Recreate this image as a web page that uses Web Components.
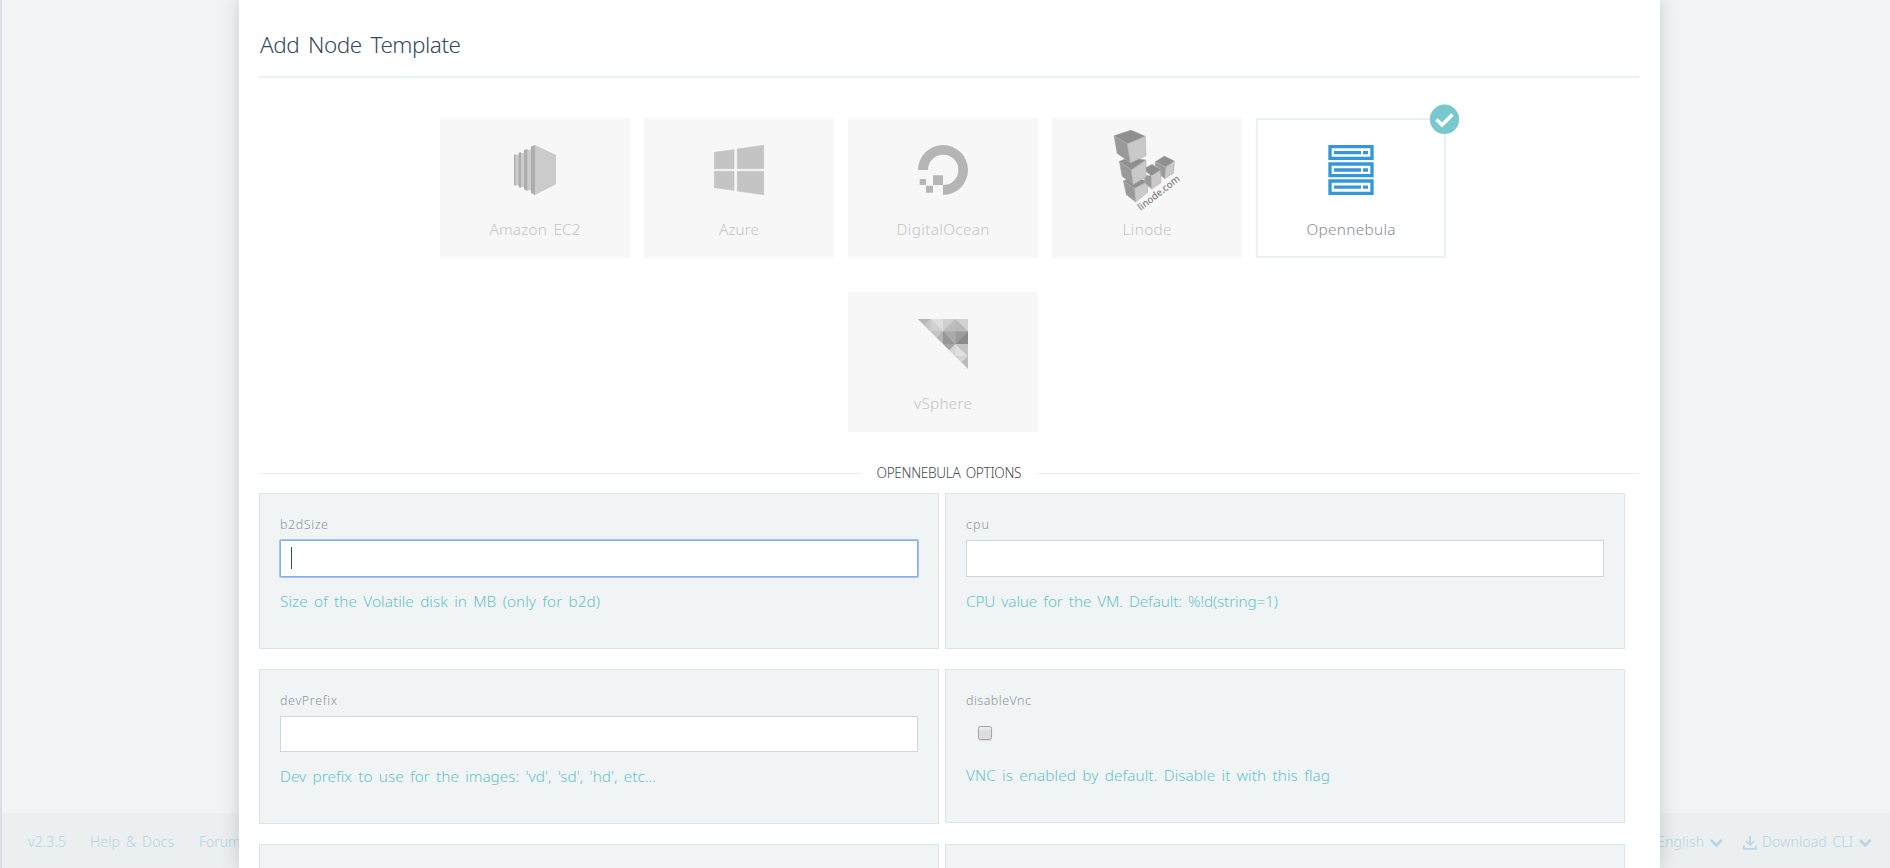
<!DOCTYPE html>
<html lang="en">
<head>
<meta charset="utf-8">
<title>Add Node Template</title>
<style>
html,body{margin:0;height:100%;overflow:hidden;background:#f0f4f5}
body{font-family:"Noto Sans","Open Sans",sans-serif;font-weight:340}
</style>
</head>
<body>
<node-template-page></node-template-page>
<script>
const define = (name, html, setup) => customElements.define(name, class extends HTMLElement {
  connectedCallback() {
    if (this.shadowRoot) return;
    const t = document.createElement('template');
    t.innerHTML = html;
    this.attachShadow({ mode: 'open' }).append(t.content.cloneNode(true));
    if (setup) setup(this, this.shadowRoot);
  }
});

/* Text whose tracking is tuned so that it spans a given width. */
define('tracked-text', `<style>:host{display:inline-block;white-space:pre}span{display:inline-block;word-spacing:.15em}</style><span></span>`, (el, root) => {
  const s = root.querySelector('span');
  s.textContent = el.getAttribute('text');
  const want = +el.getAttribute('width');
  const n = s.textContent.length;
  const ls = (want - s.getBoundingClientRect().width) / (n - 1);
  s.style.letterSpacing = ls + 'px';
  s.style.marginRight = -ls + 'px';
});

define('provider-card', `<style>
:host{display:block;position:relative;box-sizing:border-box;width:190px;height:140px;background:#f7f7f7;color:#c4c4c4;text-align:center}
:host([selected]){background:#fff;box-shadow:inset 0 0 0 2px #ebf1f0;color:#858d95}
.art{height:101px}
.name{font-size:15.3px;line-height:20px;height:20px}
.badge{display:none;position:absolute;left:173px;top:-14px}
:host([selected]) .badge{display:block}
::slotted(svg){display:block}
</style><div class="art"><slot></slot></div><div class="name"></div>
<svg class="badge" width="31" height="31" viewBox="0 0 31 31"><circle cx="15.5" cy="15.3" r="14.7" fill="#78c9cf"/><path d="M7.500 15.500l5.500 5.500L23.500 10.500" fill="none" stroke="#fff" stroke-width="3.600"/></svg>`, (el, root) => {
  root.querySelector('.name').innerHTML = `<tracked-text text="${el.getAttribute('name')}" width="${el.getAttribute('w')}"></tracked-text>`;
});

define('section-divider', `<style>
:host{display:flex;align-items:center;height:22px;gap:15px;color:#46494d;font-size:13.6px;line-height:22px}
i{height:1px;background:#ececec;flex:1;margin-top:1px}
</style><i></i><slot></slot><i></i>`);

define('option-panel', `<style>
:host{display:block;box-sizing:border-box;width:680px;height:var(--h,156px);background:#f0f4f5;border:1px solid #dce4e4;padding:22px 20px 0}
.label{font-size:12.5px;line-height:18px;height:18px;color:#8d959a;margin-bottom:6px}
.field{box-sizing:border-box;height:var(--f,37px);background:#fff;border:1px solid #cdd6da;display:flex;align-items:center;padding-left:10px}
:host([focus]) .field{border-color:#86aeee;box-shadow:0 0 0 1px #a3c3f5;border-radius:1px}
.caret{display:none;width:1px;height:22px;background:#34495e;margin-top:-1px}
:host([focus]) .caret{display:block}
:host([check]) .field{background:none;border-color:transparent;padding-left:11px}
.box{display:none;box-sizing:border-box;width:14px;height:14px;border:1px solid #a3a3a3;border-radius:2.5px;background:linear-gradient(#eee,#dcdcdc 45%,#dedede);box-shadow:0 1px 1px rgba(0,0,0,.1);margin-top:-2px}
:host([check]) .box{display:block}
.help{font-size:15.3px;line-height:24px;height:24px;color:#68c3ca;margin-top:12px}
</style><div class="label"></div><div class="field"><span class="caret"></span><span class="box"></span></div><div class="help"></div>`, (el, root) => {
  const a = k => el.getAttribute(k);
  if (a('label')) root.querySelector('.label').innerHTML = `<tracked-text text="${a('label')}" width="${a('lw')}"></tracked-text>`;
  if (a('help')) root.querySelector('.help').innerHTML = `<tracked-text text="${a('help')}" width="${a('hw')}"></tracked-text>`;
});

define('page-footer', `<style>
:host{display:flex;justify-content:space-between;box-sizing:border-box;height:55px;background:#ebefef;color:#b5d4e7;font-size:14px;line-height:22px;padding:18px 17px 0 26px}
div{display:flex}
.l{gap:25px}
svg{display:block;margin-top:5px}
</style><div class="l"><tracked-text text="v2.3.5" width="38"></tracked-text><tracked-text text="Help &amp; Docs" width="84" style="margin-left:-1px"></tracked-text><tracked-text text="Forums" width="48"></tracked-text></div>
<div class="r"><tracked-text text="English" width="47"></tracked-text>
<svg width="15" height="14" viewBox="0 0 15 14" style="margin-left:5px"><path d="M2 4l5.3 5.4L12.600 4" fill="none" stroke="#b5d5e9" stroke-width="2.600"/></svg>
<svg width="14" height="14" viewBox="0 0 14 14" style="margin-left:19px"><path d="M7 0v8M3 5l4 4 4-4" fill="none" stroke="#b5d5e9" stroke-width="1.700"/><path d="M1 9.500v3.300h11.800V9.500" fill="none" stroke="#b5d5e9" stroke-width="1.800"/></svg>
<tracked-text text="Download CLI" width="91" style="margin-left:5px"></tracked-text>
<svg width="15" height="14" viewBox="0 0 15 14" style="margin-left:5px"><path d="M2 4l5.300 5.400L12.600 4" fill="none" stroke="#b5d5e9" stroke-width="2.600"/></svg></div>`);

define('modal-sheet', `<style>
:host{display:block;box-sizing:border-box;width:1421px;height:868px;background:#fff;box-shadow:0 0 18px rgba(0,0,0,.17);padding:0 20px;overflow:hidden}
header{box-sizing:border-box;height:78px;width:1380px;padding:30px 0 0 1px;border-bottom:2px solid #ebf1f0;color:#34495e;font-size:22.5px;line-height:30px}
</style><header><tracked-text text="Add Node Template" width="201"></tracked-text></header><slot></slot>`);

define('node-template-page', `<style>
:host{display:grid;grid-template-columns:2px 237px 1421px 230px;grid-template-rows:813px 55px;width:1890px;height:868px;overflow:hidden}
.strip{grid-area:1/1/3/2;background:#dbe0e7}
page-footer{grid-area:2/2/3/5}
modal-sheet{grid-area:1/3/3/4;position:relative}
.cards{display:flex;flex-wrap:wrap;justify-content:center;gap:34px 14px;width:1006px;margin:40px 0 0 181px}
section-divider{width:1380px;margin-top:30px}
.grid{display:grid;grid-template-columns:680px 680px;grid-template-rows:156px 155px 155px;gap:20px 6px;margin-top:9px}
</style>
<div class="strip"></div>
<page-footer></page-footer>
<modal-sheet>
<div class="cards">
<provider-card name="Amazon EC2" w="91"><svg width="190" height="101" viewBox="630 354 570 303"><g fill="#cbcbcb"><path d="M915 435l63 30v88l-63 32z"/><path d="M890 449h13v122h-13zM872 459h11v102h-11zM857 464h11v92h-11z"/></g><g fill="#adadad"><path d="M903 440l12-5v150l-12-6zM882 451l10-4v126l-10-5zM866 458l7-2v108l-7-3zM852 464l5-2v96l-5-3z"/></g></svg></provider-card>
<provider-card name="Azure" w="40"><svg width="190" height="101" viewBox="42 54 570 303"><path fill="#c4c4c4" stroke="#c4c4c4" stroke-width="2" stroke-linejoin="round" d="M253 157l59-8v57h-59zM322 147l79-11v70h-79zM253 214h59v57l-59-8zM322 214h79v70l-79-11z"/></svg></provider-card>
<provider-card name="DigitalOcean" w="93"><svg width="190" height="101" viewBox="654 54 570 303"><g fill="#b5b5b5"><path d="M864 210a75 75 0 1 1 75 75v-30a45.500 45.500 0 1 0-45-45z"/><path d="M909 226h30v29h-30zM888 257h21v21h-21zM869 237h19v18h-19z"/></g></svg></provider-card>
<provider-card name="Linode" w="49"><svg width="190" height="101" viewBox="36 84 570 303"><g stroke="#aaa" stroke-width="1.500" stroke-linejoin="round">
<g><path fill="#8f8f8f" d="M250 273l33-16 40 19-39 19z"/><path fill="#999" d="M250 273l34 22 3 41-28-22z"/><path fill="#c9c9c9" d="M284 295l39-21v33l-36 29z"/></g>
<g><path fill="#8f8f8f" d="M310 237l26-14 28 16-30 19z"/><path fill="#999" d="M312 255l22 3 1 39-20-18z"/><path fill="#c9c9c9" d="M334 262l30-23-2 40-27 18z"/></g>
<g><path fill="#8f8f8f" d="M346 215l27-17 30 15-25 18z"/><path fill="#999" d="M346 215l32 17-3 34-12-9-2-20-15-10z"/><path fill="#c9c9c9" d="M378 232l25-18-2 35-27 17z"/></g>
<g><path fill="#8f8f8f" d="M238 214l30-12 50 8-44 30z"/><path fill="#999" d="M238 214l36 26 6 44-34-25z"/><path fill="#c9c9c9" d="M274 240l44-29v50l-39 23z"/></g>
<g><path fill="#8f8f8f" d="M222 137l51-17 43 19-54 23z"/><path fill="#999" d="M222 137l40 25 9 57-40-29z"/><path fill="#c9c9c9" d="M262 162l54-23 2 58-47 22z"/></g></g>
<text transform="translate(303 363) rotate(-38)" font-family="Noto Sans, sans-serif" font-weight="500" font-size="30" textLength="151" lengthAdjust="spacingAndGlyphs" fill="#808080">linode.com</text></svg></provider-card>
<provider-card name="Opennebula" w="89" selected><svg width="190" height="101" viewBox="648 84 570 303"><g fill="none" stroke="#3497db" stroke-width="10"><path d="M870 170h126v35H870zM870 222h126v35H870zM870 273h126v37H870z"/></g><path d="M882 188h81m6 0h15M882 240h81m6 0h15M882 291.500h81m6 0h15" stroke="#3497db" stroke-width="10"/></svg></provider-card>
<provider-card name="vSphere" w="58"><svg width="190" height="101" viewBox="54 36 570 303"><path fill="#c6c6c6" d="M264 117h150v149z"/><path fill="#b6b6b6" d="M264 117h37v36z"/><path fill="#c6c6c6" d="M301 117v36l-19-18z"/><path fill="#dedede" d="M301 117h38v37z"/><path fill="#d0d0d0" d="M301 117l38 37h-38z"/><path fill="#cfcfcf" d="M339 117h37l-37 37z"/><path fill="#bdbdbd" d="M376 117v37h-37z"/><path fill="#d2d2d2" d="M376 117h38v37z"/><path fill="#b9b9b9" d="M376 117l38 37h-38z"/><path fill="#c6c6c6" d="M301 154h38l-19 19z"/><path fill="#b5b5b5" d="M339 154v37l-19-18z"/><path fill="#aaa" d="M339 154h37v38z"/><path fill="#979797" d="M339 154l37 38h-37z"/><path fill="#9b9b9b" d="M376 154h38l-38 38z"/><path fill="#8b8b8b" d="M414 154v38h-38z"/><path fill="#a4a4a4" d="M339 192h37l-18 18z"/><path fill="#d4d4d4" d="M376 192v37l-18-19z"/><path fill="#e0e0e0" d="M376 192l38 37h-38z"/><path fill="#c3c3c3" d="M376 192h38v37z"/><path fill="#d5d5d5" d="M376 229h38l-19 18z"/><path fill="#bbb" d="M414 229v37l-19-19z"/></svg></provider-card>
</div>
<section-divider><tracked-text text="OPENNEBULA OPTIONS" width="145"></tracked-text></section-divider>
<div class="grid">
<option-panel focus label="b2dSize" lw="48" help="Size of the Volatile disk in MB (only for b2d)" hw="320"></option-panel>
<option-panel label="cpu" lw="23" help="CPU value for the VM. Default: %!d(string=1)" hw="312"></option-panel>
<option-panel style="--h:155px;--f:36px" label="devPrefix" lw="57" help="Dev prefix to use for the images: 'vd', 'sd', 'hd', etc..." hw="376"></option-panel>
<option-panel check style="--h:154px;--f:35px" label="disableVnc" lw="65" help="VNC is enabled by default. Disable it with this flag" hw="364"></option-panel>
<option-panel></option-panel><option-panel></option-panel>
</div>
</modal-sheet>`);
</script>
</body>
</html>
